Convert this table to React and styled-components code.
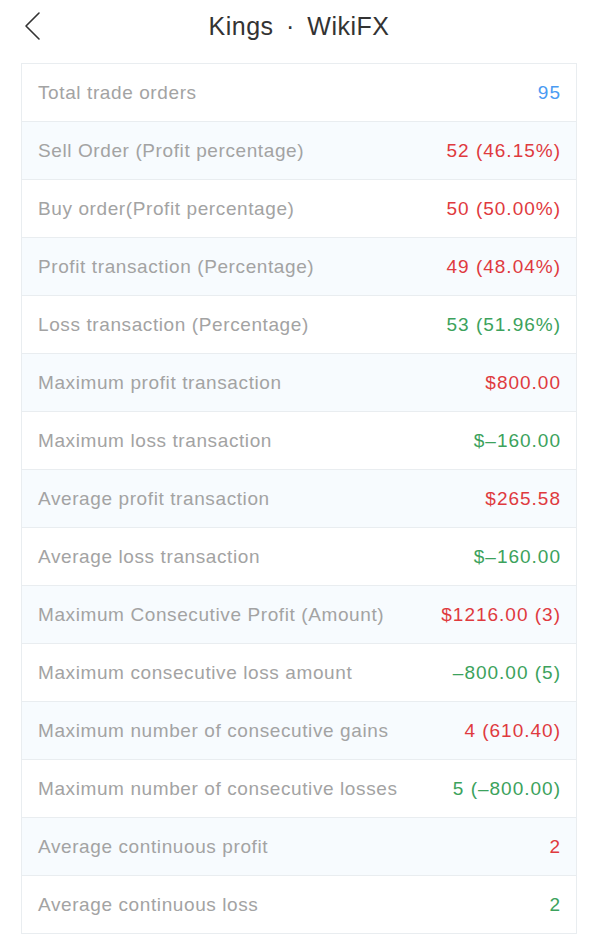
import React from "react";
import styled, { createGlobalStyle } from "styled-components";

const rows = [
  ["Total trade orders", "95", "blue"],
  ["Sell Order (Profit percentage)", "52 (46.15%)", "red"],
  ["Buy order(Profit percentage)", "50 (50.00%)", "red"],
  ["Profit transaction (Percentage)", "49 (48.04%)", "red"],
  ["Loss transaction (Percentage)", "53 (51.96%)", "green"],
  ["Maximum profit transaction", "$800.00", "red"],
  ["Maximum loss transaction", "$\u2013160.00", "green"],
  ["Average profit transaction", "$265.58", "red"],
  ["Average loss transaction", "$\u2013160.00", "green"],
  ["Maximum Consecutive Profit (Amount)", "$1216.00 (3)", "red"],
  ["Maximum consecutive loss amount", "\u2013800.00 (5)", "green"],
  ["Maximum number of consecutive gains", "4 (610.40)", "red"],
  ["Maximum number of consecutive losses", "5 (\u2013800.00)", "green"],
  ["Average continuous profit", "2", "red"],
  ["Average continuous loss", "2", "green"]
];

const colors = {
  blue: "#4a9bf2",
  red: "#df3a3e",
  green: "#3ca25c"
};

export default function App() {
  return (
    <Page>
      <GlobalStyle />
      <Header>
        <Back>
          <svg width="20" height="30" viewBox="0 0 20 30">
            <path
              d="M17 2 L4 15 L17 28"
              fill="none"
              stroke="#333"
              strokeWidth="1.6"
              strokeLinecap="round"
              strokeLinejoin="round"
            />
          </svg>
        </Back>
        <Title>Kings · WikiFX</Title>
      </Header>
      <Table>
        {rows.map(([label, value, tone], i) => (
          <Row key={label} shaded={i % 2 === 1}>
            <Label>{label}</Label>
            <Value tone={tone}>{value}</Value>
          </Row>
        ))}
      </Table>
    </Page>
  );
}

const GlobalStyle = createGlobalStyle`
  body {
    margin: 0;
    background: #fff;
    font-family: "Liberation Sans", Arial, sans-serif;
  }
`;

const Page = styled.div`
  width: 598px;
  height: 934px;
  overflow: hidden;
  background: #fff;
`;

const Header = styled.div`
  position: relative;
  height: 63px;
  display: flex;
  align-items: flex-start;
  justify-content: center;
`;

const Back = styled.div`
  position: absolute;
  left: 22px;
  top: 11px;
`;

const Title = styled.div`
  margin-top: 11px;
  font-size: 25px;
  line-height: 30px;
  color: #333;
  letter-spacing: 0.5px;
  word-spacing: 5px;
`;

const Table = styled.div`
  margin: 0 21px;
  border: 1px solid #e9edf0;
  border-bottom: none;
`;

const Row = styled.div`
  height: 57px;
  display: flex;
  align-items: center;
  justify-content: space-between;
  padding: 0 16px 0 16px;
  background: ${props => (props.shaded ? "#f7fbfe" : "#fff")};
  border-bottom: 1px solid #e9edf0;
`;

const Label = styled.span`
  font-size: 19px;
  letter-spacing: 0.6px;
  color: #a3a3a3;
`;

const Value = styled.span`
  font-size: 19px;
  letter-spacing: 1px;
  margin-right: -1px;
  color: ${props => colors[props.tone]};
`;
